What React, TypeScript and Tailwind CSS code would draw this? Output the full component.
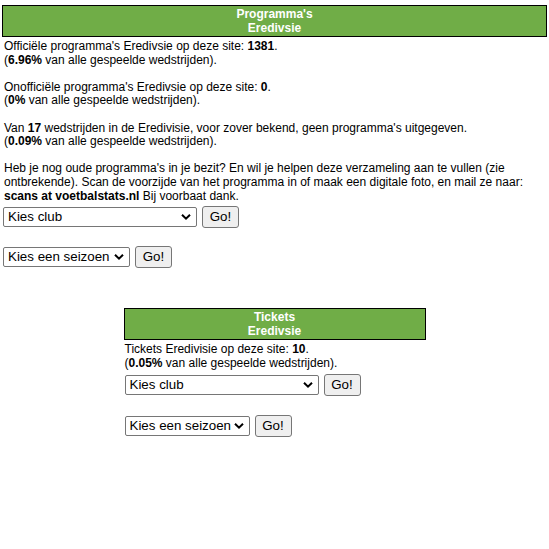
import React from "react";

function Chevron() {
  return (
    <svg width="10" height="7" viewBox="0 0 10 7" className="absolute right-[5px] top-1/2 -translate-y-1/2 pointer-events-none">
      <path d="M1 1.2 L5 5.2 L9 1.2" fill="none" stroke="#000" strokeWidth="2" />
    </svg>
  );
}

function Sel({ label, w }: { label: string; w: string }) {
  return (
    <div className={`relative h-[20px] ${w} border border-[#767676] rounded-[2px] bg-white`}>
      <div className="pl-[4px] text-[13.33px] leading-[18px] text-black whitespace-nowrap">{label}</div>
      <Chevron />
    </div>
  );
}

function Go() {
  return (
    <div className="h-[22px] w-[37px] border border-[#767676] rounded-[3px] bg-[#efefef] text-[13.33px] leading-[20px] text-center text-black">
      Go!
    </div>
  );
}

function Header({ a, b }: { a: string; b: string }) {
  return (
    <div className="border border-black bg-[#70ad47] text-white font-bold text-center text-[12px] leading-[14px] py-[1px]">
      <div>{a}</div>
      <div>{b}</div>
    </div>
  );
}

export default function App() {
  return (
    <div className="bg-white min-h-[549px] text-black text-[12px] leading-[13.6px]" style={{ fontFamily: '"Liberation Sans", Arial, sans-serif' }}>
      <div className="pt-[5px] px-[2px]">
        <Header a="Programma's" b="Eredivsie" />
        <div className="pl-[2px] pt-[3px]">
          <p>
            Officiële programma's Eredivsie op deze site: <b>1381</b>.<br />
            (<b>6.96%</b> van alle gespeelde wedstrijden).
          </p>
          <p className="mt-[13.6px]">
            Onofficiële programma's Eredivsie op deze site: <b>0</b>.<br />
            (<b>0%</b> van alle gespeelde wedstrijden).
          </p>
          <p className="mt-[13.6px]">
            Van <b>17</b> wedstrijden in de Eredivisie, voor zover bekend, geen programma's uitgegeven.<br />
            (<b>0.09%</b> van alle gespeelde wedstrijden).
          </p>
          <p className="mt-[13.6px]">
            Heb je nog oude programma's in je bezit? En wil je helpen deze verzameling aan te vullen (zie ontbrekende). Scan de voorzijde van het programma in of maak een digitale foto, en mail ze naar: <b>scans at voetbalstats.nl</b> Bij voorbaat dank.
          </p>
        </div>
        <div className="flex items-center gap-[5px] mt-[3px] pl-[1px]">
          <Sel label="Kies club" w="w-[194px]" />
          <Go />
        </div>
        <div className="flex items-center gap-[5px] mt-[18px] pl-[1px]">
          <Sel label="Kies een seizoen" w="w-[127px]" />
          <Go />
        </div>
      </div>
      <div className="w-[302px] mx-auto mt-[40px]">
        <Header a="Tickets" b="Eredivsie" />
        <div className="pl-[1px] pt-[3px]">
          <p>
            Tickets Eredivisie op deze site: <b>10</b>.<br />
            (<b>0.05%</b> van alle gespeelde wedstrijden).
          </p>
        </div>
        <div className="flex items-center gap-[5px] mt-[4px] pl-[1px]">
          <Sel label="Kies club" w="w-[194px]" />
          <Go />
        </div>
        <div className="flex items-center gap-[5px] mt-[19px] pl-[1px]">
          <Sel label="Kies een seizoen" w="w-[125px]" />
          <Go />
        </div>
      </div>
    </div>
  );
}
